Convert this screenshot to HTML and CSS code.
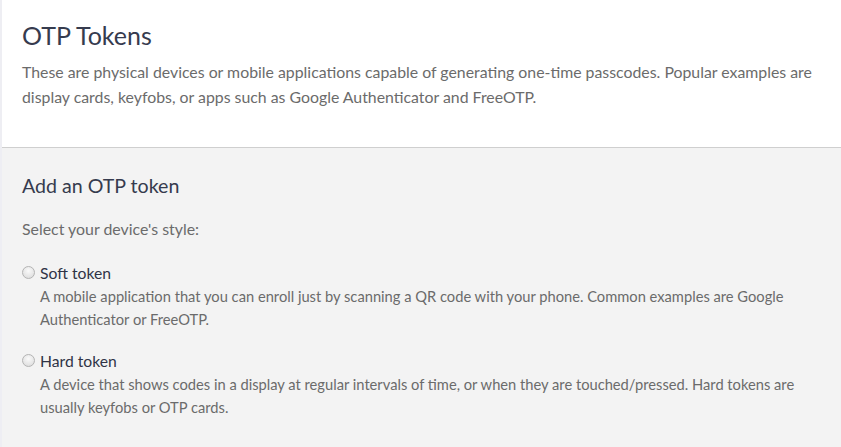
FILE: index.html
```html
<!DOCTYPE html>
<html lang="en">
<head>
<meta charset="utf-8">
<title>OTP Tokens</title>
<link rel="stylesheet" href="styles.css">
</head>
<body>
<div class="page">
  <header class="intro">
    <h1 class="title">OTP Tokens</h1>
    <p class="lead">These are physical devices or mobile applications capable of generating one-time passcodes. Popular examples are display cards, keyfobs, or apps such as Google Authenticator and FreeOTP.</p>
  </header>
  <section class="add">
    <h2 class="subtitle">Add an OTP token</h2>
    <p class="prompt">Select your device's style:</p>
    <div class="options">
      <label class="option">
        <span class="radio"></span>
        <span class="option-body">
          <span class="option-name">Soft token</span>
          <span class="option-desc">A mobile application that you can enroll just by scanning a QR code with your phone. Common examples are Google Authenticator or FreeOTP.</span>
        </span>
      </label>
      <label class="option">
        <span class="radio"></span>
        <span class="option-body">
          <span class="option-name">Hard token</span>
          <span class="option-desc">A device that shows codes in a display at regular intervals of time, or when they are touched/pressed. Hard tokens are usually keyfobs or OTP cards.</span>
        </span>
      </label>
    </div>
  </section>
</div>
</body>
</html>
```
FILE: styles.css
```css
html, body {
  margin: 0;
  padding: 0;
  height: 100%;
}
body {
  font-family: Lato, "Open Sans", sans-serif;
  background: #f3f3f3;
}
.page {
  border-left: 2px solid #eeeef3;
  min-height: 100%;
  box-sizing: border-box;
}
.intro {
  background: #fff;
  border-bottom: 1px solid #cfcfcf;
  padding: 20px 20px 38px 20px;
}
.title {
  margin: 0;
  font-size: 25px;
  font-weight: 400;
  color: #363b4e;
  line-height: 30px;
}
.lead {
  margin: 9px 0 0;
  font-size: 15.85px;
  line-height: 25px;
  color: #6b6b6b;
}
.add {
  padding: 24px 20px 20px 20px;
}
.subtitle {
  margin: 0;
  font-size: 19.6px;
  font-weight: 400;
  color: #363b4e;
  line-height: 28px;
}
.prompt {
  margin: 18px 0 0;
  font-size: 15.9px;
  line-height: 22px;
  color: #6b6b6b;
}
.options {
  margin-top: 21px;
  display: flex;
  flex-direction: column;
  gap: 18px;
}
.option {
  display: flex;
  gap: 5px;
  align-items: flex-start;
}
.radio {
  flex: none;
  width: 11px;
  height: 11px;
  margin-top: 5px;
  border-radius: 50%;
  border: 1px solid #b4b4b4;
  background: radial-gradient(circle at 50% 35%, #fafafa 0%, #e6e6e6 60%, #d8d8d8 100%);
}
.option-body {
  display: flex;
  flex-direction: column;
}
.option-name {
  font-size: 15.7px;
  line-height: 24px;
  color: #2f3346;
}
.option-desc {
  font-size: 14.7px;
  line-height: 23px;
  color: #6b6b6b;
}
```
